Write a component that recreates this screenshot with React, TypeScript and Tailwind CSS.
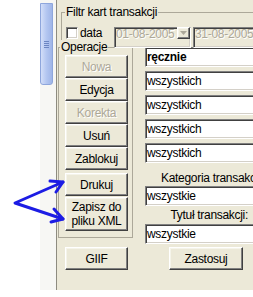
import React from "react";

const raised =
  "border border-t-white border-l-white border-r-[#404040] border-b-[#404040] shadow-[inset_-1px_-1px_0_#808080,inset_1px_1px_0_#f5f4ea] bg-[#ece9d8]";
const sunken =
  "border border-t-[#808080] border-l-[#808080] border-r-white border-b-white shadow-[inset_1px_1px_0_#404040,inset_-1px_-1px_0_#d4d0c8]";
const disabledText = "text-[#aca899] [text-shadow:1px_1px_0_#ffffff]";

function Btn({
  children,
  h = "h-[23px]",
  disabled = false,
  extra = "",
}: {
  children: React.ReactNode;
  h?: string;
  disabled?: boolean;
  extra?: string;
}) {
  return (
    <div
      className={`${raised} ${h} ${extra} w-[63px] shrink-0 flex items-center justify-center text-center leading-[14px] ${
        disabled ? disabledText : "text-black"
      }`}
    >
      {children}
    </div>
  );
}

function Field({ children, bold = false, extra = "" }: { children: React.ReactNode; bold?: boolean; extra?: string }) {
  return (
    <div
      className={`${sunken} ${extra} bg-white h-[20px] w-[118px] shrink-0 flex items-center pl-[1px] leading-[14px] whitespace-nowrap ${
        bold ? "font-bold" : ""
      }`}
    >
      {children}
    </div>
  );
}

function DateBox({ w, withButton, text }: { w: string; withButton?: boolean; text: string }) {
  return (
    <div
      className={`${sunken} ${w} relative z-10 h-[21px] shrink-0 bg-[#ece9d8] flex items-start leading-[12px] pl-[1px]`}
    >
      <span className={`flex-1 whitespace-nowrap ${disabledText}`}>{text}</span>
      {withButton && (
        <div className={`${raised} w-[13px] h-[12px] flex items-center justify-center -mt-[1px]`}>
          <svg width="7" height="4" viewBox="0 0 7 4">
            <path d="M0 0h7L3.5 4z" fill="#aca899" />
          </svg>
        </div>
      )}
    </div>
  );
}

export default function App() {
  return (
    <div className="relative w-[253px] h-[297px] overflow-hidden bg-white flex items-start font-['Liberation_Sans',Arial,sans-serif] text-[12px] tracking-[-0.3px] text-black">
      {/* left white area */}
      <div className="w-[40px] h-[290px] shrink-0 bg-white" />
      {/* splitter column */}
      <div className="w-[17px] h-[290px] shrink-0 bg-[#f7f7f4] border-r border-r-[#8e8c80] flex flex-col">
        <div className="mt-[3px] w-[13px] h-[82px] rounded-b-[3px] border border-[#8ea6dc] bg-linear-to-r from-[#d3def8] via-[#b3c6f0] to-[#9fb5e8] flex flex-col items-center justify-center gap-[1px]">
          <div className="w-[5px] h-[1px] bg-[#6d86c2]" />
          <div className="w-[5px] h-[1px] bg-[#6d86c2]" />
          <div className="w-[5px] h-[1px] bg-[#6d86c2]" />
          <div className="w-[5px] h-[1px] bg-[#6d86c2]" />
        </div>
      </div>

      {/* main panel */}
      <div className="w-[196px] h-[290px] shrink-0 bg-[#ece9d8] flex flex-col overflow-hidden">
        {/* Filtr kart transakcji */}
        <div className="ml-[4px] mt-[12px] h-[28px] shrink-0 border-t border-l border-[#aca899] pl-[4px]">
          <div className="-mt-[8px] h-[14px] flex">
            <span className="px-[1px] -ml-[1px] leading-[14px] whitespace-nowrap bg-[#ece9d8]">Filtr kart transakcji</span>
          </div>
          <div className="mt-[8px] flex items-start">
            <div className="w-[48px] shrink-0 flex items-start">
              <div className={`${sunken} w-[12px] h-[12px] bg-white shrink-0`} />
              <span className="ml-[2px] -mt-[1px] leading-[14px]">data</span>
            </div>
            <DateBox w="w-[77px]" withButton text="01-08-2005" />
            <div className="ml-[2px] shrink-0">
              <DateBox w="w-[70px]" text="31-08-2005" />
            </div>
          </div>
        </div>

        <div className="flex items-start">
          {/* left column */}
          <div className="flex flex-col shrink-0">
            <fieldset className="ml-[1px] w-[75px] h-[198px] border border-[#aca899] pl-[6px] min-w-0">
              <legend className="-ml-[5px] px-[1px] leading-[14px]">Operacje</legend>
              <div className="mt-[1px] flex flex-col">
                <Btn disabled>Nowa</Btn>
                <Btn>Edycja</Btn>
                <Btn disabled>Korekta</Btn>
                <Btn>Usuń</Btn>
                <Btn>Zablokuj</Btn>
                <Btn extra="mt-[3px]">Drukuj</Btn>
                <Btn extra="mt-[1px]" h="h-[34px]">
                  Zapisz do
                  <br />
                  pliku XML
                </Btn>
              </div>
            </fieldset>
            <div className="ml-[8px] mt-[9px]">
              <Btn>GIIF</Btn>
            </div>
          </div>

          {/* right column */}
          <div className="ml-[12px] mt-[7px] flex flex-col w-[108px] shrink-0">
            <Field bold>ręcznie</Field>
            <Field extra="mt-[4px]">wszystkich</Field>
            <Field extra="mt-[4px]">wszystkich</Field>
            <Field extra="mt-[4px]">wszystkich</Field>
            <Field extra="mt-[4px]">wszystkich</Field>
            <div className="mt-[8px] ml-[16px] leading-[14px] whitespace-nowrap">Kategoria transakcji</div>
            <Field extra="mt-[1px]">wszystkie</Field>
            <div className="mt-[2px] leading-[14px] whitespace-nowrap text-right pr-[5px]">Tytuł transakcji:</div>
            <Field extra="mt-[2px]">wszystkie</Field>
            <div className="mt-[3px] ml-[24px]">
              <div className={`${raised} w-[74px] h-[23px] flex items-center justify-center leading-[14px]`}>Zastosuj</div>
            </div>
          </div>
        </div>
      </div>

      {/* blue annotation arrows */}
      <svg className="absolute left-0 top-0 pointer-events-none" width="253" height="297" viewBox="0 0 253 297">
        <g stroke="#1c1ce4" strokeWidth="3" strokeLinecap="round" strokeLinejoin="round" fill="none">
          <path d="M63 182 L15 203 L63 219" />
          <path d="M50 181 L63 182 L56 192" />
          <path d="M54 209 L63 219 L51 222" />
        </g>
      </svg>
    </div>
  );
}
